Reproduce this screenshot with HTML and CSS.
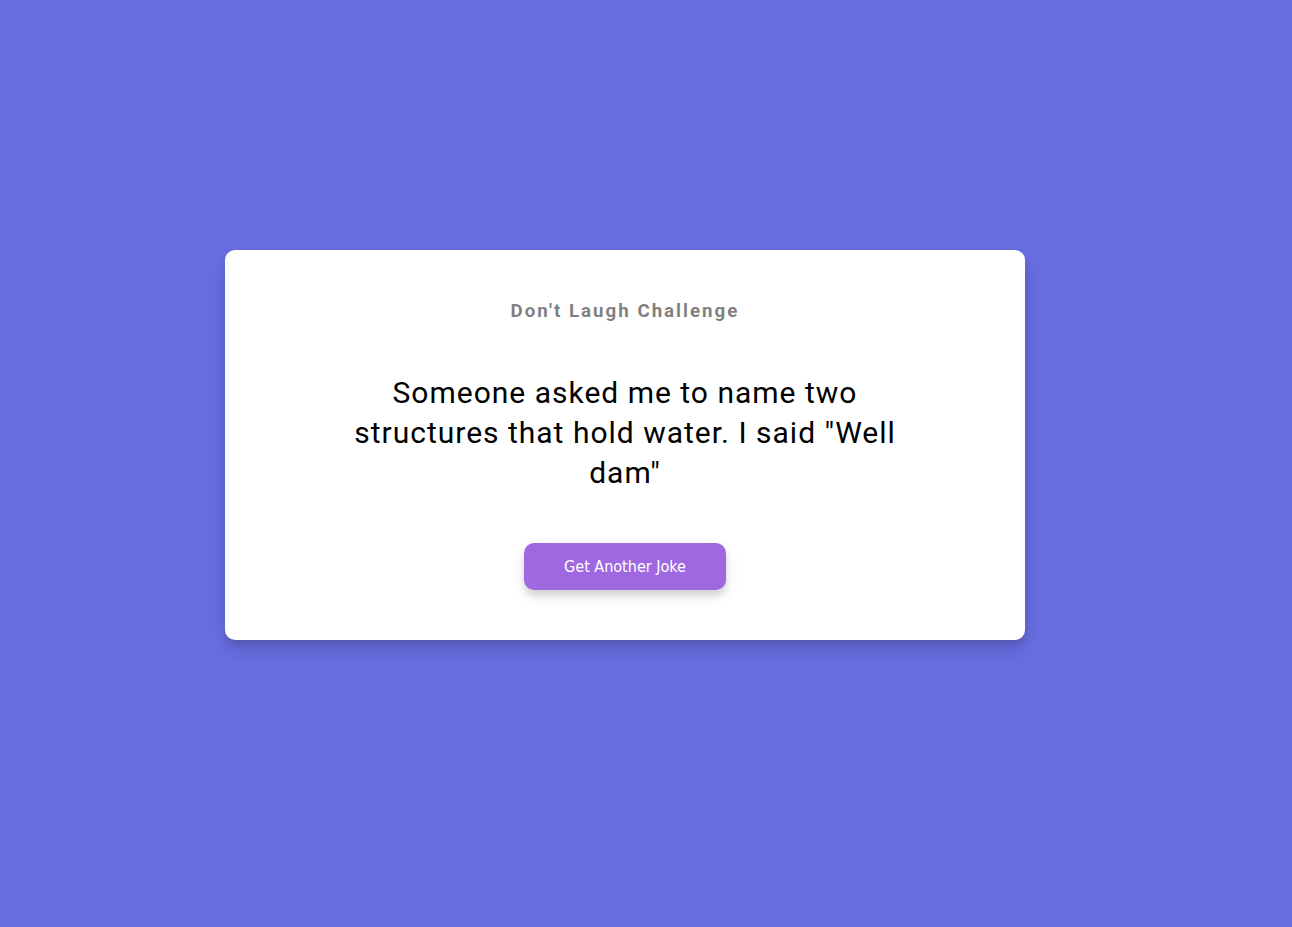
FILE: index.html
```html
<!DOCTYPE html>
<html lang="en">
<head>
<meta charset="UTF-8">
<title>Dad Jokes</title>
<link rel="stylesheet" href="styles.css">
</head>
<body>
  <div class="container">
    <h3 class="title">Don't Laugh Challenge</h3>
    <div class="joke">Someone asked me to name two structures that hold water. I said "Well dam"</div>
    <button class="btn">Get Another Joke</button>
  </div>
</body>
</html>
```
FILE: styles.css
```css
* { box-sizing: border-box; }

html, body { margin: 0; }

body {
  background: #686de0;
  font-family: Roboto, "Liberation Sans", sans-serif;
  height: 100vh;
  overflow: hidden;
  display: flex;
  align-items: center;
  justify-content: center;
  padding: 0 42px 37px 0;
}

.container {
  background: #fff;
  border-radius: 10px;
  box-shadow: 0 10px 20px rgba(0, 0, 0, 0.1), 0 6px 6px rgba(0, 0, 0, 0.1);
  padding: 50px 20px;
  text-align: center;
  width: 800px;
}

.title {
  margin: 0;
  font-size: 18.72px;
  line-height: 23px;
  font-weight: bold;
  color: #000;
  opacity: 0.5;
  letter-spacing: 2px;
}

.joke {
  font-size: 30px;
  letter-spacing: 1px;
  line-height: 40px;
  margin: 50px auto;
  max-width: 600px;
  color: #000;
}

.btn {
  background: #9f68e0;
  color: #fff;
  border: 0;
  border-radius: 10px;
  box-shadow: 0 5px 15px rgba(0, 0, 0, 0.1), 0 6px 6px rgba(0, 0, 0, 0.1);
  padding: 14px 40px;
  font-family: "DejaVu Sans Condensed", Tahoma, sans-serif;
  font-size: 16px;
  line-height: 19px;
  cursor: pointer;
}
```
